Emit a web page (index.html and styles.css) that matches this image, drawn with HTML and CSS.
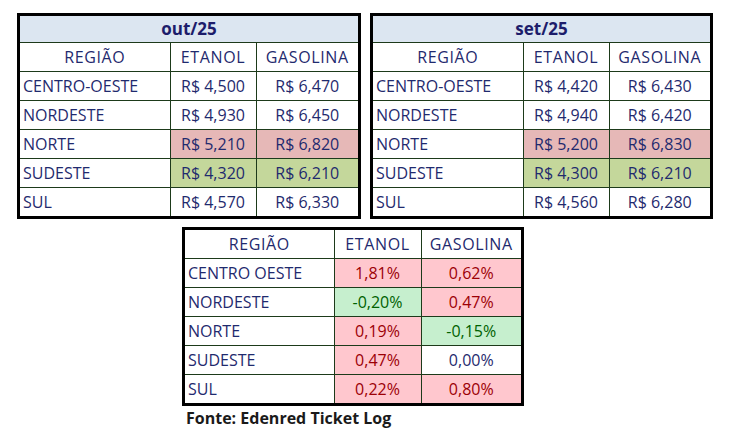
FILE: index.html
```html
<!DOCTYPE html>
<html lang="pt-BR">
<head>
<meta charset="utf-8">
<title>Preços combustíveis</title>
<link rel="stylesheet" href="styles.css">
</head>
<body>
<div class="page">
  <div class="top-row">
    <div class="box box-left">
      <table class="grid">
        <colgroup><col class="c1"><col class="c2"><col class="c3"></colgroup>
        <tr class="title-row"><th colspan="3">out/25</th></tr>
        <tr class="head-row"><td class="ctr">REGIÃO</td><td class="ctr">ETANOL</td><td class="ctr">GASOLINA</td></tr>
        <tr><td>CENTRO-OESTE</td><td class="ctr">R$ 4,500</td><td class="ctr">R$ 6,470</td></tr>
        <tr><td>NORDESTE</td><td class="ctr">R$ 4,930</td><td class="ctr">R$ 6,450</td></tr>
        <tr><td>NORTE</td><td class="ctr hi-red">R$ 5,210</td><td class="ctr hi-red">R$ 6,820</td></tr>
        <tr><td>SUDESTE</td><td class="ctr hi-green">R$ 4,320</td><td class="ctr hi-green">R$ 6,210</td></tr>
        <tr><td>SUL</td><td class="ctr">R$ 4,570</td><td class="ctr">R$ 6,330</td></tr>
      </table>
    </div>
    <div class="box box-right">
      <table class="grid">
        <colgroup><col class="c1"><col class="c2"><col class="c3"></colgroup>
        <tr class="title-row"><th colspan="3">set/25</th></tr>
        <tr class="head-row"><td class="ctr">REGIÃO</td><td class="ctr">ETANOL</td><td class="ctr">GASOLINA</td></tr>
        <tr><td>CENTRO-OESTE</td><td class="ctr">R$ 4,420</td><td class="ctr">R$ 6,430</td></tr>
        <tr><td>NORDESTE</td><td class="ctr">R$ 4,940</td><td class="ctr">R$ 6,420</td></tr>
        <tr><td>NORTE</td><td class="ctr hi-red">R$ 5,200</td><td class="ctr hi-red">R$ 6,830</td></tr>
        <tr><td>SUDESTE</td><td class="ctr hi-green">R$ 4,300</td><td class="ctr hi-green">R$ 6,210</td></tr>
        <tr><td>SUL</td><td class="ctr">R$ 4,560</td><td class="ctr">R$ 6,280</td></tr>
      </table>
    </div>
  </div>
  <div class="bottom">
    <div class="box box-var">
      <table class="grid">
        <colgroup><col class="v1"><col class="v2"><col class="v3"></colgroup>
        <tr class="head-row"><td class="ctr">REGIÃO</td><td class="ctr">ETANOL</td><td class="ctr">GASOLINA</td></tr>
        <tr><td>CENTRO OESTE</td><td class="ctr up">1,81%</td><td class="ctr up">0,62%</td></tr>
        <tr><td>NORDESTE</td><td class="ctr down">-0,20%</td><td class="ctr up">0,47%</td></tr>
        <tr><td>NORTE</td><td class="ctr up">0,19%</td><td class="ctr down">-0,15%</td></tr>
        <tr><td>SUDESTE</td><td class="ctr up">0,47%</td><td class="ctr">0,00%</td></tr>
        <tr><td>SUL</td><td class="ctr up">0,22%</td><td class="ctr up">0,80%</td></tr>
      </table>
    </div>
    <p class="source">Fonte: Edenred Ticket Log</p>
  </div>
</div>
</body>
</html>
```

FILE: styles.css
```css
html, body {
  margin: 0;
  padding: 0;
  background: #ffffff;
}

.page {
  width: 741px;
  height: 441px;
  font-family: "Open Sans", "DejaVu Sans", sans-serif;
  color: #1f2a6e;
}

.top-row {
  display: flex;
  gap: 9px;
  padding: 13px 0 0 17px;
}

.box {
  border: 3px solid #000000;
  background: #ffffff;
}

.box-left { width: 338px; }
.box-right { width: 337px; }

.grid {
  border-collapse: collapse;
  border-style: hidden;
  table-layout: fixed;
  width: 100%;
}

.grid td, .grid th {
  border: 1px solid #1d3a1a;
  height: 28px;
  padding: 0 0 0 3px;
  font-size: 16px;
  line-height: 20px;
  font-weight: 400;
  white-space: nowrap;
  overflow: hidden;
}

.head-row td {
  letter-spacing: 0.6px;
}

.c1 { width: 150px; }
.c2 { width: 86px; }
.c3 { width: auto; }

.title-row th {
  background: #dce6f1;
  color: #1d1d6b;
  font-weight: 700;
  font-size: 17px;
  text-align: center;
  padding: 0;
  height: 26px;
}

.grid td.ctr {
  text-align: center;
  padding: 0;
}

.hi-red { background: #e6b8b7; }
.hi-green { background: #c4d79b; }

.bottom {
  padding: 8px 0 0 182px;
}

.box-var { width: 336px; }

.v1 { width: 149px; }
.v2 { width: 87px; }
.v3 { width: auto; }

.grid td.up {
  background: #ffc7ce;
  color: #9c0006;
}

.grid td.down {
  background: #c6efce;
  color: #006100;
}

.source {
  margin: 1px 0 0 4px;
  font-size: 16px;
  font-weight: 700;
  color: #1a1a1a;
}
```
